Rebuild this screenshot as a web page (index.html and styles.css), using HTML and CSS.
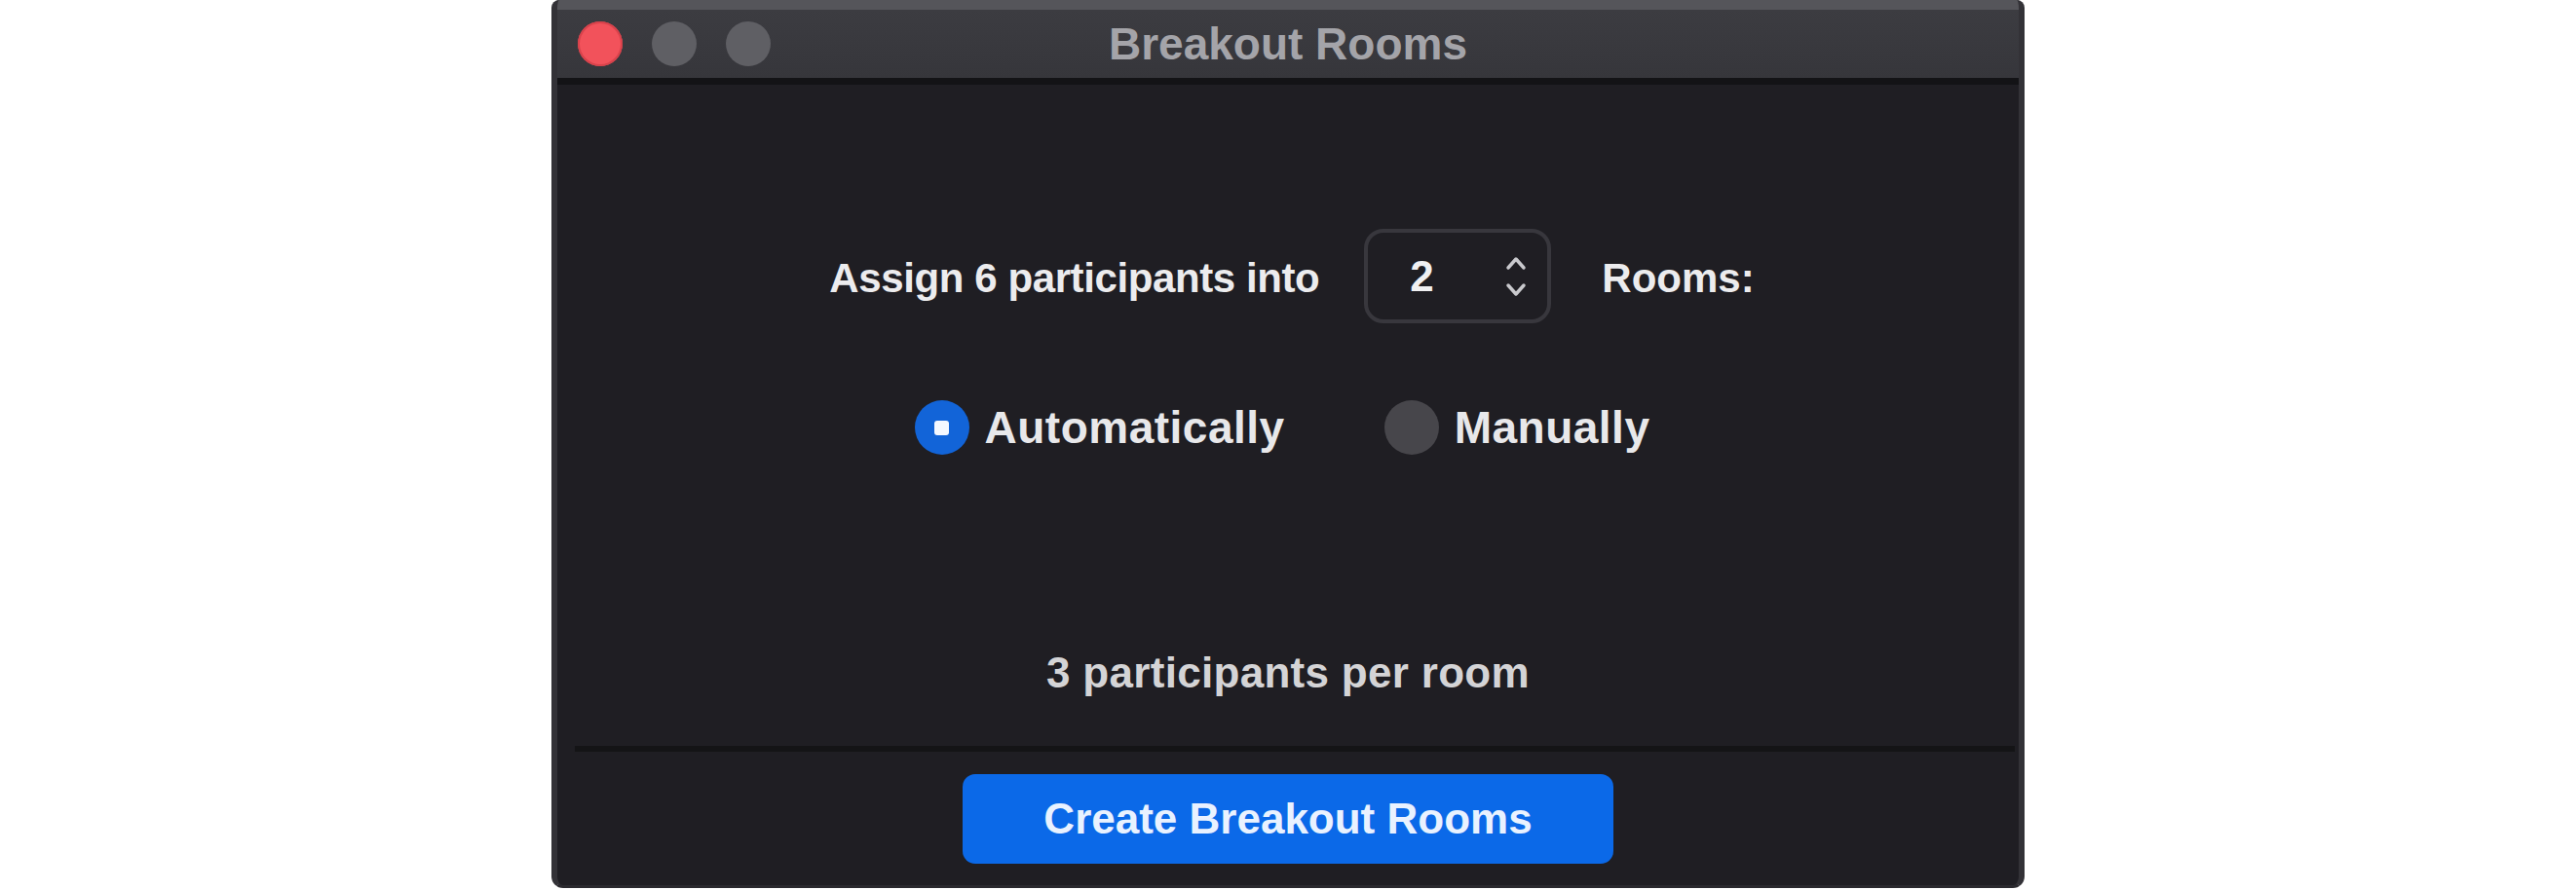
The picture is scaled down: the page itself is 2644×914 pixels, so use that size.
FILE: index.html
```html
<!DOCTYPE html>
<html lang="en">
<head>
<meta charset="utf-8">
<title>Breakout Rooms</title>
<link rel="stylesheet" href="styles.css">
</head>
<body>
<div class="window">
  <header class="titlebar">
    <div class="lights">
      <span class="light close"></span>
      <span class="light"></span>
      <span class="light"></span>
    </div>
    <div class="title">Breakout Rooms</div>
    <div class="spacer"></div>
  </header>
  <div class="divider"></div>
  <main class="content">
    <div class="assign-row">
      <span class="assign-label">Assign 6 participants into</span>
      <div class="stepper">
        <span class="stepper-value">2</span>
        <svg class="stepper-arrows" width="28" height="48" viewBox="0 0 28 48">
          <polyline points="6,15 14,6 22,15" fill="none" stroke="#c9c9cd" stroke-width="3.5" stroke-linecap="round" stroke-linejoin="round"/>
          <polyline points="6,33 14,42 22,33" fill="none" stroke="#c9c9cd" stroke-width="3.5" stroke-linecap="round" stroke-linejoin="round"/>
        </svg>
      </div>
      <span class="rooms-label">Rooms:</span>
    </div>
    <div class="mode-row">
      <div class="radio-option">
        <span class="radio checked"><span class="dot"></span></span>
        <span class="radio-text">Automatically</span>
      </div>
      <div class="radio-option">
        <span class="radio"></span>
        <span class="radio-text">Manually</span>
      </div>
    </div>
    <p class="per-room">3 participants per room</p>
    <div class="separator"></div>
    <div class="footer">
      <button class="create-btn">Create Breakout Rooms</button>
    </div>
  </main>
</div>
</body>
</html>
```

FILE: styles.css
```css
html, body {
  margin: 0;
  height: 100%;
}

body {
  background: #ffffff;
  display: flex;
  justify-content: center;
  font-family: "Liberation Sans", Arial, sans-serif;
}

.window {
  width: 1512px;
  height: 912px;
  box-sizing: border-box;
  background: #1f1e23;
  border-left: 6px solid #333237;
  border-right: 6px solid #333237;
  border-bottom: 3px solid #2a292e;
  border-radius: 8px 8px 12px 12px;
  display: flex;
  flex-direction: column;
  overflow: hidden;
}

.titlebar {
  height: 80px;
  box-sizing: border-box;
  border-top: 10px solid #55555a;
  background: linear-gradient(#3c3c41, #36363b);
  display: grid;
  grid-template-columns: 1fr auto 1fr;
  align-items: center;
}

.lights {
  display: flex;
  gap: 30px;
  padding-left: 21px;
}

.light {
  width: 46px;
  height: 46px;
  border-radius: 50%;
  background: #5f5f64;
}

.light.close {
  background: #f2525b;
  box-shadow: inset 0 0 0 2px #d8424b;
}

.title {
  font-size: 46px;
  font-weight: 700;
  color: #a4a4a9;
  letter-spacing: 0;
}

.divider {
  height: 7px;
  background: #131316;
}

.content {
  flex: 1;
  display: flex;
  flex-direction: column;
  align-items: center;
}

.assign-row {
  margin-top: 148px;
  margin-left: 8px;
  height: 97px;
  display: flex;
  align-items: center;
  color: #ececee;
}

.assign-label {
  font-size: 42px;
  font-weight: 700;
  letter-spacing: -0.4px;
  margin-right: 46px;
  padding-top: 4px;
}

.stepper {
  width: 192px;
  height: 97px;
  box-sizing: border-box;
  border: 4px solid #38373d;
  border-radius: 20px;
  display: flex;
  align-items: center;
  padding-left: 43px;
}

.stepper-value {
  font-size: 44px;
  font-weight: 700;
  color: #f0f0f2;
}

.stepper-arrows {
  margin-left: 70px;
}

.rooms-label {
  font-size: 42px;
  font-weight: 700;
  margin-left: 52px;
  padding-top: 4px;
}

.mode-row {
  margin-top: 77px;
  margin-left: -12px;
  height: 60px;
  display: flex;
  align-items: center;
  gap: 102px;
}

.radio-option {
  display: flex;
  align-items: center;
}

.radio {
  width: 56px;
  height: 56px;
  border-radius: 50%;
  background: #47464b;
  display: flex;
  align-items: center;
  justify-content: center;
}

.radio.checked {
  background: #1264d8;
}

.dot {
  width: 15px;
  height: 15px;
  border-radius: 3px;
  background: #f4f8ff;
}

.radio-text {
  margin-left: 16px;
  font-size: 46px;
  font-weight: 700;
  letter-spacing: 0.5px;
  color: #e8e8ea;
}

.per-room {
  margin: 197px 0 0;
  line-height: 50px;
  font-size: 44px;
  font-weight: 700;
  letter-spacing: 0.3px;
  color: #d4d4d6;
}

.separator {
  align-self: stretch;
  height: 6px;
  background: #141416;
  margin: 50px 4px 0 18px;
}

.footer {
  margin-top: 23px;
  display: flex;
  justify-content: center;
}

.create-btn {
  width: 668px;
  height: 92px;
  border: none;
  border-radius: 13px;
  background: #0b69e8;
  color: #e9f2ff;
  font-family: "Liberation Sans", Arial, sans-serif;
  font-size: 44px;
  font-weight: 700;
  padding: 0;
}
```
